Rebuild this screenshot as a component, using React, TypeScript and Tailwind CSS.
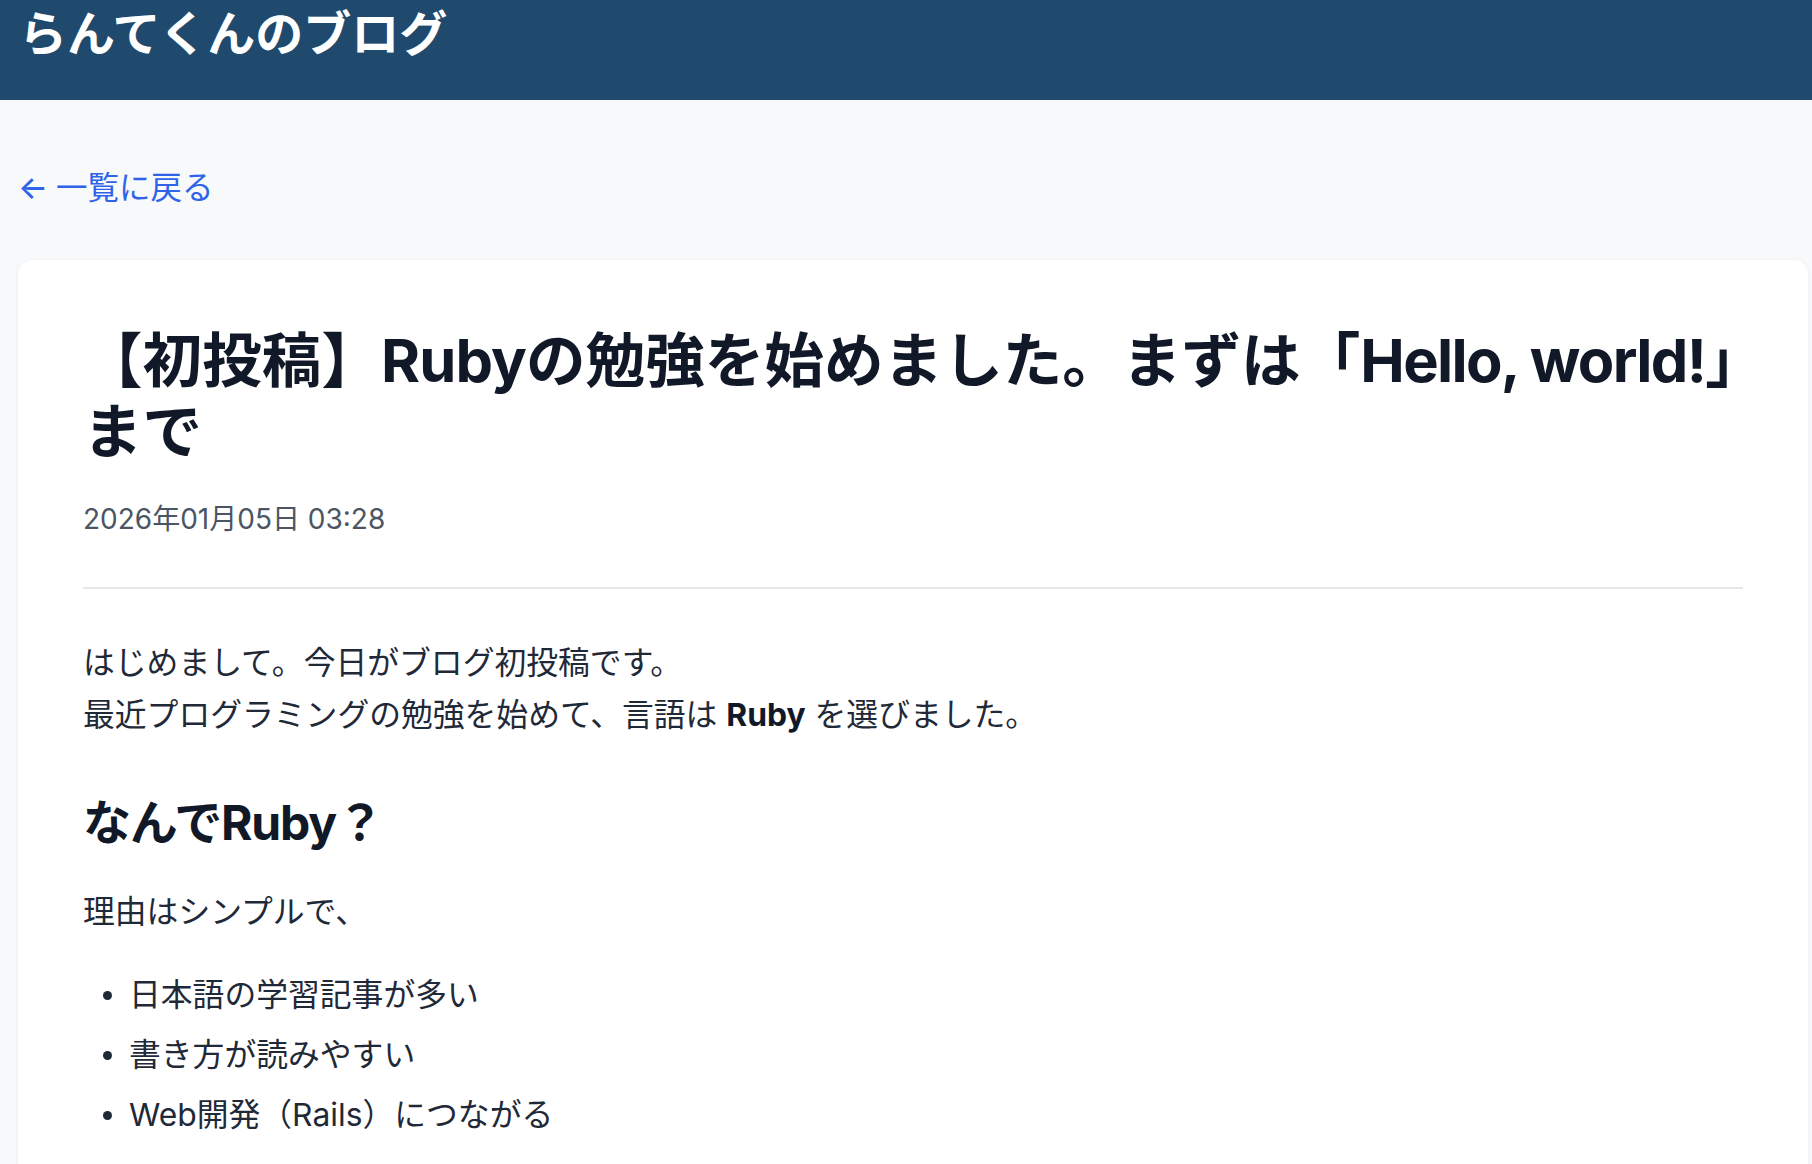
import React from "react";

const font = { fontFamily: 'Inter, "Noto Sans CJK JP", "Noto Sans", sans-serif' };

function Bullet() {
  return <span className="ml-[20px] mr-[17px] h-[9px] w-[9px] shrink-0 rounded-full bg-[#1f2937]" />;
}

export default function App() {
  return (
    <div className="min-h-screen bg-[#f8f9fb]" style={font}>
      <header className="h-[100px] bg-[#1f4a6e] px-[19px] pt-[10px]">
        <h1 className="text-[48px] leading-[48px] font-bold text-white">らんてくんのブログ</h1>
      </header>
      <main className="pl-[18px] pr-[4px] pt-[64px] pb-[60px]">
        <a href="#" className="inline-flex items-center text-[31.5px] leading-[47px] text-[#2f63e8]">
          <span className="font-medium">←</span>
          <span className="ml-[8px]">一覧に戻る</span>
        </a>
        <article className="mt-[49px] rounded-[14px] bg-white p-[65px] shadow-[0_1px_4px_rgba(0,0,0,0.07)]">
          <h1 className="text-[59.6px] leading-[71px] font-bold text-[#111827]">
            <span className="whitespace-nowrap">
              【初投稿】<span className="tracking-[-0.015em]">Ruby</span>の勉強を始めました。まずは「
              <span className="tracking-[-0.028em]">Hello, world!</span>」
            </span>
            <br />
            まで
          </h1>
          <div className="mt-[29px] text-[28px] leading-[47px] text-[#4b5563]">2026年01月05日 03:28</div>
          <hr className="mt-[44px] border-0 border-t-2 border-[#e5e7eb]" />
          <div className="mt-[48px] text-[31.8px] leading-[52px] text-[#1f2937]">
            <p>
              はじめまして。今日がブログ初投稿です。
              <br />
              最近プログラミングの勉強を始めて、言語は <strong className="font-bold text-[#111827]">Ruby</strong> を選びました。
            </p>
            <h2 className="mt-[52px] text-[48px] leading-[60px] font-bold tracking-tight text-[#111827]">なんでRuby？</h2>
            <p className="mt-[33px]">理由はシンプルで、</p>
            <ul className="mt-[31px] flex flex-col gap-[8px]">
              <li className="flex items-center">
                <Bullet />
                日本語の学習記事が多い
              </li>
              <li className="flex items-center">
                <Bullet />
                書き方が読みやすい
              </li>
              <li className="flex items-center">
                <Bullet />
                Web開発（Rails）につながる
              </li>
            </ul>
          </div>
        </article>
      </main>
    </div>
  );
}
